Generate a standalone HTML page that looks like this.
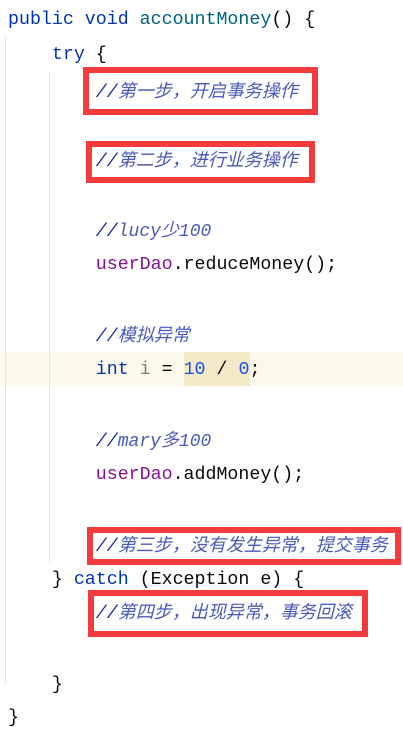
<!DOCTYPE html>
<html><head><meta charset="utf-8"><style>
body{margin:0;width:403px;height:733px;background:#fff;position:relative;overflow:hidden;font-family:"Liberation Mono",monospace;font-size:18.3px;color:#080808}
.l{position:absolute;left:8px;white-space:pre;line-height:24px}
.k{color:#0033b3}.m{color:#00627a}.f{color:#871094}.n{color:#1750eb}.g{color:#808080}
.c{color:#1a2a9a;font-style:italic;font-family:"Liberation Mono","Noto Sans CJK SC",monospace}
.c span{color:#4a5ab8;font-size:18px}
.box{position:absolute;border:6px solid #f53b3b;box-sizing:border-box}
.guide{position:absolute;width:1px;background:#e4e4e4}
</style></head><body>
<div style="position:absolute;left:0;top:352px;width:403px;height:34px;background:#fcf9ec"></div>
<div style="position:absolute;left:184px;top:352px;width:66px;height:34px;background:#f5eac8"></div>
<div class="guide" style="left:5px;top:37px;height:646px"></div>
<div class="guide" style="left:49px;top:72px;height:490px"></div>
<div class="l" style="top:8px"><span class="k">public void </span><span class="m">accountMoney</span>() {</div>
<div class="l" style="top:43px">    <span class="k">try</span> {</div>
<div class="l c" style="top:81px">        //<span>第一步，开启事务操作</span></div>
<div class="l c" style="top:150px">        //<span>第二步，进行业务操作</span></div>
<div class="l c" style="top:220px">        //<span>lucy少100</span></div>
<div class="l" style="top:253px">        <span class="f">userDao</span>.reduceMoney();</div>
<div class="l c" style="top:325px">        //<span>模拟异常</span></div>
<div class="l" style="top:358px">        <span class="k">int</span> <span class="g">i</span> = <span class="n">10</span> / <span class="n">0</span>;</div>
<div class="l c" style="top:430px">        //<span>mary多100</span></div>
<div class="l" style="top:463px">        <span class="f">userDao</span>.addMoney();</div>
<div class="l c" style="top:535px">        //<span>第三步，没有发生异常，提交事务</span></div>
<div class="l" style="top:568px">    } <span class="k">catch</span> (Exception e) {</div>
<div class="l c" style="top:602px">        //<span>第四步，出现异常，事务回滚</span></div>
<div class="l" style="top:673px">    }</div>
<div class="l" style="top:706px">}</div>
<div class="box" style="left:83px;top:67px;width:235px;height:48px"></div>
<div class="box" style="left:86px;top:141px;width:229px;height:42px"></div>
<div class="box" style="left:87px;top:527px;width:314px;height:38px"></div>
<div class="box" style="left:88px;top:590px;width:280px;height:47px"></div>
</body></html>
